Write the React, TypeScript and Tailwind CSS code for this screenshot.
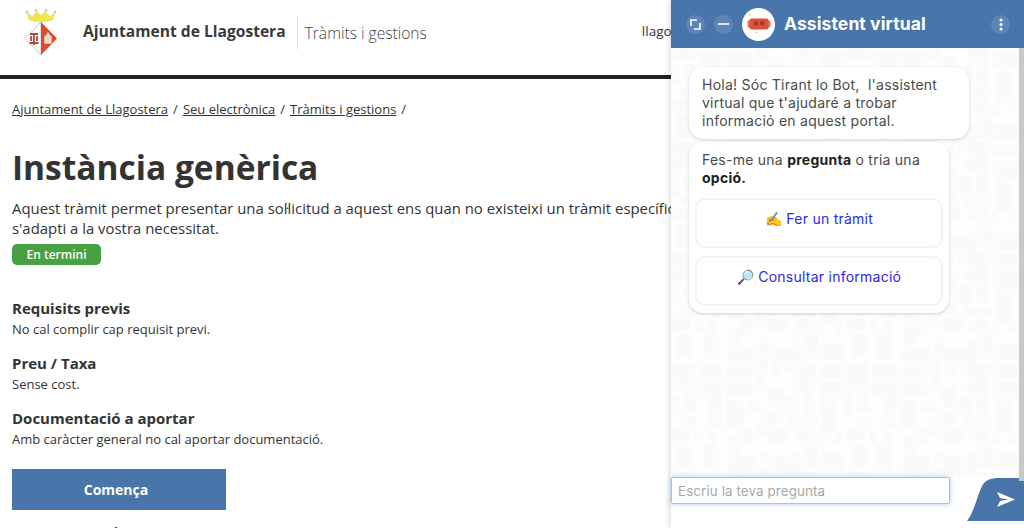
const sans = { fontFamily: '"Open Sans", sans-serif' };

function Crest() {
  return (
    <svg width="36" height="48" viewBox="0 0 36 48" className="block">
      <g transform="translate(0 1.5)">
        <path d="M4 4 L9 8 L14 3 L18 7 L22 3 L27 8 L32 4 L30 11 C24 14 12 14 6 11 Z" fill="#f1e54c" stroke="#dcd77c" strokeWidth="0.5" />
        <circle cx="4" cy="3.500" r="1.300" fill="#c4c4c4" />
        <circle cx="13" cy="2" r="1.300" fill="#c4c4c4" />
        <circle cx="23" cy="2" r="1.300" fill="#c4c4c4" />
        <circle cx="32" cy="3.500" r="1.300" fill="#c4c4c4" />
      </g>
      <path d="M18 15 L2 31.500 L18 48 Z" fill="#fff" stroke="#b9b9b9" strokeWidth="0.8" />
      <path d="M18 15 L34 31.500 L18 48 Z" fill="#e2492f" />
      <path d="M7 27 H15 M11 26 V38 M8 29 V34 M14 29 V34" stroke="#b4473c" strokeWidth="1.800" fill="none" />
      <rect x="6.500" y="35" width="9" height="2" fill="#b4473c" />
      <path d="M21 37 V29 H22.500 V27 H24 V25 H26 V27 H27.500 V29 H29 V37 Z" fill="#f0d4c8" stroke="#8a6a60" strokeWidth="0.5" />
    </svg>
  );
}

function ChatPattern() {
  const cells = [
    [0, 0, 26, 13], [27, 2, 26, 16], [54, 2, 28, 18], [84, 0, 12, 14], [97, 8, 16, 22], [121, 0, 24, 15], [148, 3, 26, 18],
    [0, 16, 8, 22], [12, 15, 13, 20], [37, 15, 15, 22], [55, 22, 18, 30], [75, 23, 16, 11], [114, 17, 14, 20], [131, 15, 13, 22], [150, 23, 16, 32],
    [10, 38, 17, 10], [36, 39, 17, 10], [84, 43, 12, 16], [92, 35, 20, 12], [118, 39, 13, 10], [130, 39, 17, 10],
    [0, 50, 20, 13], [24, 52, 8, 12], [38, 52, 8, 12], [58, 58, 12, 20], [68, 48, 14, 20], [95, 50, 22, 14], [124, 51, 20, 13], [146, 54, 8, 14], [163, 52, 8, 14],
    [5, 66, 16, 24], [32, 65, 16, 27], [57, 78, 29, 17], [88, 74, 12, 12], [98, 78, 24, 18], [122, 73, 9, 24], [132, 65, 15, 26], [148, 75, 26, 17],
    [0, 94, 25, 16], [27, 97, 25, 15], [54, 97, 29, 13], [84, 88, 13, 22], [100, 97, 10, 13], [112, 93, 8, 10], [121, 94, 25, 16], [148, 97, 25, 13],
  ];
  return (
    <svg className="absolute inset-0 h-full w-full" aria-hidden="true">
      <defs>
        <pattern id="chat-bg" width="174" height="110" patternUnits="userSpaceOnUse">
          <rect width="174" height="110" fill="#fdfdfd" />
          {cells.map(([x, y, w, h], i) => (
            <rect key={i} x={x} y={y} width={w} height={h} rx="6" fill="#fafafa" />
          ))}
        </pattern>
      </defs>
      <rect width="100%" height="100%" fill="url(#chat-bg)" />
    </svg>
  );
}

function RoundButton({ children }: { children: React.ReactNode }) {
  return <div className="flex h-[19px] w-[19px] shrink-0 items-center justify-center rounded-full bg-[#5d86b6]">{children}</div>;
}

function Section({ title, text }: { title: string; text: string }) {
  return (
    <div>
      <h3 className="text-[15px] leading-[20px] font-bold text-[#333]">{title}</h3>
      <p className="mt-px text-[13px] leading-[20px] text-[#333]">{text}</p>
    </div>
  );
}

function Chat() {
  const chatFont = { fontFamily: 'Inter, "Noto Sans", sans-serif' };
  return (
    <aside className="absolute top-0 right-0 bottom-0 flex w-[353px] flex-col bg-white shadow-[-2px_0_5px_rgba(0,0,0,0.12)]" style={chatFont}>
      <header className="flex h-[48px] shrink-0 items-center bg-[#4876ab] pr-[14px] pl-[15px]">
        <RoundButton>
          <svg width="11" height="11" viewBox="0 0 11 11" fill="none" stroke="#fff" strokeWidth="1.600">
            <path d="M7 1 H1 V7" />
            <path d="M4 10 H10 V4" />
          </svg>
        </RoundButton>
        <div className="ml-[9px]">
          <RoundButton>
            <div className="h-[1.500px] w-[11px] bg-[#dfe7f0]" />
          </RoundButton>
        </div>
        <div className="ml-[9px] flex h-[33px] w-[33px] shrink-0 items-center justify-center rounded-full bg-white">
          <svg width="24" height="24" viewBox="0 0 24 24">
            <circle cx="3" cy="3" r="0.700" fill="#e8937f" />
            <rect x="0.500" y="8.500" width="3" height="7" rx="1" fill="#e07a64" />
            <rect x="20.500" y="8.500" width="3" height="7" rx="1" fill="#e07a64" />
            <rect x="2.500" y="6.500" width="19" height="11" rx="2" fill="#d9523a" />
            <rect x="7" y="9.500" width="4" height="3.500" rx="0.800" fill="#a5331f" />
            <rect x="13" y="9.500" width="4" height="3.500" rx="0.800" fill="#a5331f" />
            <circle cx="9.500" cy="20.500" r="0.800" fill="#e8937f" />
          </svg>
        </div>
        <span className="ml-[9px] text-[17.500px] font-bold tracking-[0.1px] text-white">Assistent virtual</span>
        <div className="ml-auto">
          <RoundButton>
            <svg width="4" height="13" viewBox="0 0 4 13" fill="#fff">
              <circle cx="2" cy="2" r="1.500" />
              <circle cx="2" cy="6.500" r="1.500" />
              <circle cx="2" cy="11" r="1.500" />
            </svg>
          </RoundButton>
        </div>
      </header>
      <div className="relative min-h-0 flex-1">
        <ChatPattern />
        <div className="absolute top-0 right-0 bottom-[-5px] z-10 w-[5px] bg-[#c8c8c8]" />
        <div className="relative flex flex-col items-start gap-[3px] pt-[19px] pl-[18px] text-[14px] leading-[18px] tracking-[0.25px] text-[#4a4a4a]">
          <div className="w-[280px] rounded-[14px] bg-white pt-[9px] pr-[10px] pb-[9px] pl-[13px] shadow-[0_1px_3px_rgba(0,0,0,0.18)]">
            Hola! Sóc Tirant lo Bot,&nbsp; l'assistent virtual que t'ajudaré a trobar informació en aquest portal.
          </div>
          <div className="w-[260px] rounded-[14px] bg-white pt-[9px] pr-[6px] pb-[7px] pl-[6px] shadow-[0_1px_3px_rgba(0,0,0,0.18)]">
            <p className="pl-[7px]">
              Fes-me una <b className="text-[#222]">pregunta</b> o tria una <b className="text-[#222]">opció.</b>
            </p>
            <div className="mt-[11px] flex h-[50px] justify-center rounded-[10px] border-2 border-[#f3f3f3] pt-[10px] text-[#2a2ae6]">
              ✍️ Fer un tràmit
            </div>
            <div className="mt-[8px] flex h-[50px] justify-center rounded-[10px] border-2 border-[#f3f3f3] pt-[10px] text-[#2a2ae6]">
              🔎 Consultar informació
            </div>
          </div>
        </div>
      </div>
      <footer className="relative flex h-[52px] shrink-0 items-start">
        <input
          readOnly
          placeholder="Escriu la teva pregunta"
          className="mt-[1px] h-[27px] w-[279px] rounded-[2px] border border-[#9ec5ee] bg-white px-[6px] text-[13.400px] tracking-[0.1px] text-[#555] shadow-[0_0_5px_rgba(90,150,230,0.5)] outline-none placeholder:text-[#a8a8a8]"
        />
        <svg className="absolute right-0 bottom-[7px]" width="57" height="43" viewBox="0 0 57 43">
          <path d="M0 43 C8 32 10 18 15 8 C18 2 24 0 32 0 H57 V43 Z" fill="#4876ab" />
          <path d="M30 14 L48 21.500 L30 29 L33 23 L41 21.500 L33 20 Z" fill="#fff" />
        </svg>
      </footer>
    </aside>
  );
}

export default function App() {
  return (
    <div className="relative h-[528px] w-[1024px] overflow-hidden bg-white text-[#333]" style={sans}>
      <header className="flex h-[79px] items-start border-b-[4px] border-[#222]">
        <div className="mt-[7px] ml-[23px]">
          <Crest />
        </div>
        <span className="mt-[19px] ml-[24px] text-[15.600px] leading-[24px] font-bold text-[#3a3a3a]">Ajuntament de Llagostera</span>
        <div className="mt-[16px] ml-[11px] h-[33px] w-px bg-[#dcdcdc]" />
        <span className="mt-[20px] ml-[7px] text-[15.600px] leading-[26px] font-light text-[#444]">Tràmits i gestions</span>
        <span className="mt-[20px] ml-[215px] text-[13.500px] leading-[22px]">llagostera.cat</span>
      </header>
      <main className="pt-[19px] pl-[12px]">
        <nav className="flex gap-[5px] text-[13px] leading-[22px] text-[#333]">
          <a className="underline">Ajuntament de Llagostera</a>
          <span>/</span>
          <a className="underline">Seu electrònica</a>
          <span>/</span>
          <a className="underline">Tràmits i gestions</a>
          <span>/</span>
        </nav>
        <h1 className="mt-[24px] text-[33.500px] leading-[46px] font-bold text-[#333]">Instància genèrica</h1>
        <p className="mt-[8px] w-[800px] text-[14.900px] leading-[20px] text-[#333]">
          Aquest tràmit permet presentar una soŀlicitud a aquest ens quan no existeixi un tràmit específic que
          <br />
          s'adapti a la vostra necessitat.
        </p>
        <div className="mt-[6px] flex h-[21px] w-[89px] items-center justify-center rounded-[5px] bg-[#47a142] text-[12px] font-semibold text-white">
          En termini
        </div>
        <div className="mt-[33px] flex flex-col gap-[14px]">
          <Section title="Requisits previs" text="No cal complir cap requisit previ." />
          <Section title="Preu / Taxa" text="Sense cost." />
          <Section title="Documentació a aportar" text="Amb caràcter general no cal aportar documentació." />
        </div>
        <button className="mt-[20px] flex h-[41px] w-[214px] items-center justify-center bg-[#4876ab] pr-[6px] text-[14px] font-bold text-white">
          Comença
        </button>
        <p className="mt-[12px] text-[15px] leading-[20px] font-bold">Passos a seguir</p>
      </main>
      <Chat />
    </div>
  );
}
